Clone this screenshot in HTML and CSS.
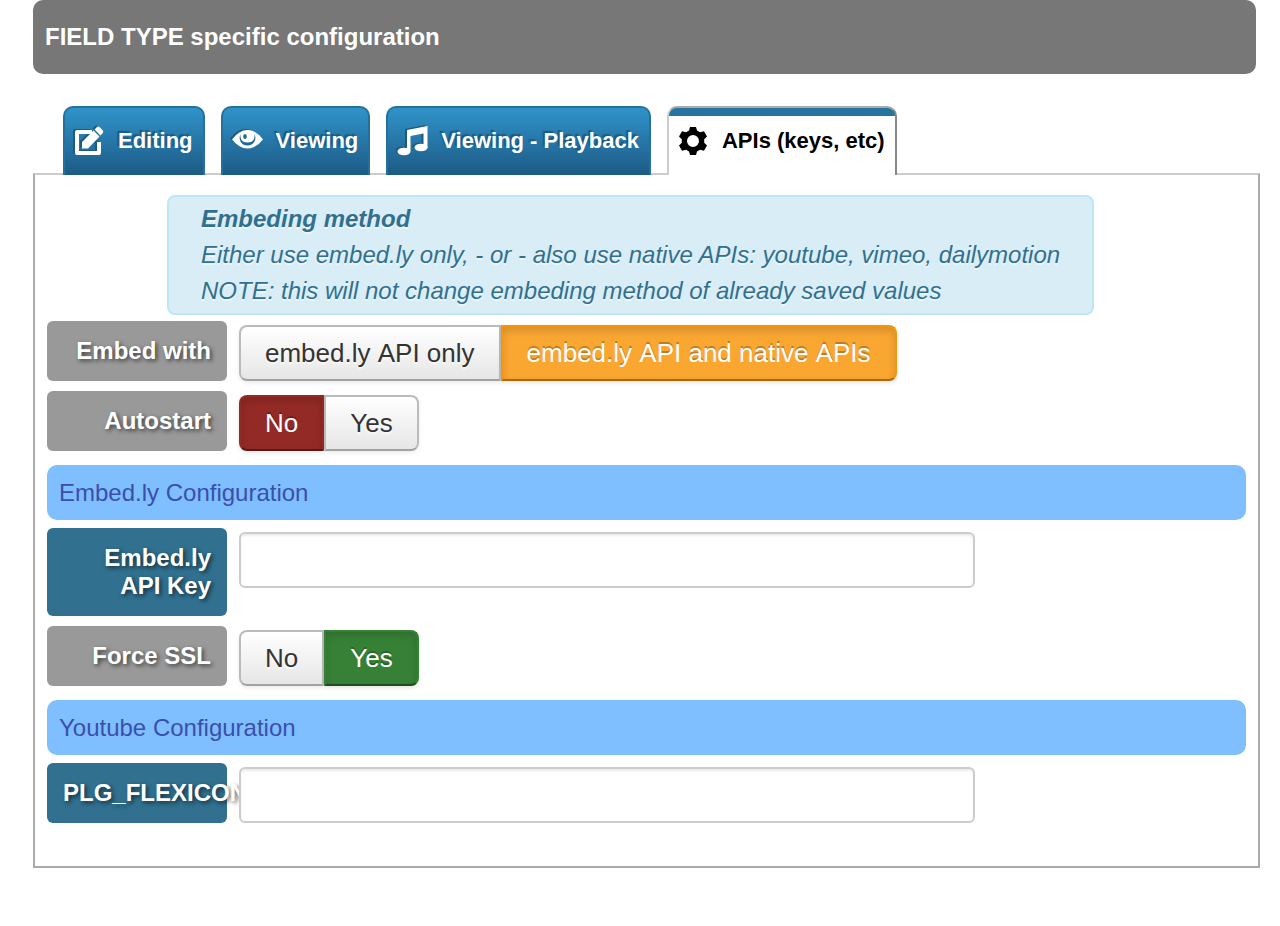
FILE: index.html
```
<!DOCTYPE html>
<html lang="en">
<head>
  <meta charset="UTF-8" />
  <meta name="viewport" content="width=device-width, initial-scale=1" />
  <title>Field type configuration</title>
  <link rel="stylesheet" href="styles.css">
</head>
<body>

<main>
  <h1 class="page-title">FIELD TYPE specific configuration</h1>

  <nav class="tabs">
    <a href="#editing" class="tab">
      <svg class="tab-icon" viewBox="0 0 30 30" aria-hidden="true">
        <path d="M17 7H2V28H24V17" fill="none" stroke="currentColor" stroke-width="4" stroke-linejoin="round"/>
        <path d="M7 23.500V17L18.500 5.500L24.500 11.500L13 23.500ZM19.500 4.500L22 2Q23.500 1 25 2.500L27.500 5Q29 6.500 27.800 8L25.500 10.500Z" fill="currentColor"/>
      </svg>
      Editing
    </a>
    <a href="#viewing" class="tab">
      <svg class="tab-icon" viewBox="0 0 30 30" aria-hidden="true">
        <path d="M-1 14.500Q6 5 14.500 5T30 14.500Q23 23.500 14.500 23.500T-1 14.500Z" fill="currentColor"/>
        <path d="M7.500 9C5 14 8 20.500 14.500 20.500S24 14 21.500 9C22 14 20 17.500 14.500 17.500S7 14 7.500 9Z" fill="#206896"/>
        <ellipse cx="12" cy="11.500" rx="1.800" ry="2.500" fill="#206896"/>
      </svg>
      Viewing
    </a>
    <a href="#playback" class="tab">
      <svg class="tab-icon" viewBox="0 0 30 30" aria-hidden="true">
        <path d="M9 5L29.500 1V23H25.500V8.500L12.500 11V26H9Z" fill="currentColor"/>
        <ellipse cx="6" cy="26.500" rx="6.500" ry="3.800" fill="currentColor"/>
        <ellipse cx="23" cy="22.500" rx="6.500" ry="3.800" fill="currentColor"/>
      </svg>
      Viewing - Playback
    </a>
    <a href="#apis" class="tab tab-active" aria-current="page">
      <svg class="tab-icon" viewBox="0 0 30 30" aria-hidden="true">
        <path fill-rule="evenodd" d="M11 2H17L18 5.500L21 7.300L25 6.300L28 11.500L25.200 14.200V17.800L28 20.500L25 25.700L21 24.700L18 26.500L17 30H11L10 26.500L7 24.700L3 25.700L0 20.500L2.800 17.800V14.200L0 11.500L3 6.300L7 7.300L10 5.500ZM14 10A6 6 0 1 0 14 22A6 6 0 1 0 14 10Z" fill="currentColor"/>
      </svg>
      APIs (keys, etc)
    </a>
  </nav>

  <form class="panel" id="apis">
    <div class="note">
      <strong>Embeding method</strong><br>
      Either use embed.ly only, - or - also use native APIs: youtube, vimeo, dailymotion<br>
      NOTE: this will not change embeding method of already saved values
    </div>

    <div class="row">
      <span class="label" id="embed-label">Embed with</span>
      <div class="toggle toggle-wide" role="radiogroup" aria-labelledby="embed-label">
        <input type="radio" name="embed" id="embed-only">
        <label for="embed-only">embed.ly API only</label>
        <input type="radio" name="embed" id="embed-native" checked>
        <label for="embed-native" class="orange">embed.ly API and native APIs</label>
      </div>
    </div>

    <div class="row">
      <span class="label" id="autostart-label">Autostart</span>
      <div class="toggle" role="radiogroup" aria-labelledby="autostart-label">
        <input type="radio" name="autostart" id="autostart-no" checked>
        <label for="autostart-no" class="red">No</label>
        <input type="radio" name="autostart" id="autostart-yes">
        <label for="autostart-yes" class="green">Yes</label>
      </div>
    </div>

    <h2 class="section-title">Embed.ly Configuration</h2>

    <div class="row">
      <label class="label label-blue" for="embedly-key">Embed.ly API Key</label>
      <input type="text" class="text-input" id="embedly-key" name="embedly_key">
    </div>

    <div class="row">
      <span class="label" id="ssl-label">Force SSL</span>
      <div class="toggle" role="radiogroup" aria-labelledby="ssl-label">
        <input type="radio" name="ssl" id="ssl-no">
        <label for="ssl-no" class="red">No</label>
        <input type="radio" name="ssl" id="ssl-yes" checked>
        <label for="ssl-yes" class="green">Yes</label>
      </div>
    </div>

    <h2 class="section-title">Youtube Configuration</h2>

    <div class="row">
      <label class="label label-blue" for="youtube-key">PLG_FLEXICON</label>
      <input type="text" class="text-input" id="youtube-key" name="youtube_key">
    </div>
  </form>
</main>

</body>
</html>
```

FILE: styles.css
```
* {
  box-sizing: border-box;
}

body {
  margin: 0;
  background: #fff;
  color: #333;
  font-family: "Liberation Sans", Arial, Helvetica, sans-serif;
  font-size: 24px;
}

main {
  padding: 0 20px 58px 33px;
}

.page-title {
  margin: 0 4px 32px 0;
  padding: 23px 12px;
  border-radius: 10px;
  background: #777;
  color: #fff;
  font-size: 24px;
  line-height: 28px;
}

/* Tabs */
.tabs {
  display: flex;
  gap: 16px;
  margin: 0 30px -2px;
  position: relative;
}

.tab {
  display: flex;
  gap: 13px;
  padding: 18px 10px 19px;
  border: 2px solid #23719c;
  border-bottom: 0;
  border-radius: 10px 10px 0 0;
  background: linear-gradient(#3093c9, #1c5a85);
  color: #fff;
  font-size: 22px;
  font-weight: bold;
  line-height: 30px;
  text-decoration: none;
  text-shadow: -2px -2px 1px #1c5a80;
  white-space: nowrap;
}

.tab-icon {
  width: 30px;
  height: 30px;
  margin-top: -1px;
  overflow: visible;
  filter: drop-shadow(-2px -1px 0 #1c5a80);
}

.tab-active {
  border-color: #aaa #888 #ccc #ccc;
  background: linear-gradient(#26749f 8px, #fff 8px);
  color: #000;
  text-shadow: none;
}

.tab-active .tab-icon {
  filter: none;
}

/* Panel */
.panel {
  padding: 20px 12px 33px;
  border: 2px solid #aaa;
  border-top-color: #ccc;
}

.note {
  width: fit-content;
  margin: 0 0 6px 120px;
  padding: 4px 32px;
  border: 2px solid #bce8f1;
  border-radius: 8px;
  background: #d9edf7;
  color: #31708f;
  font-style: italic;
  line-height: 36px;
  text-shadow: 0 2px 0 rgba(255, 255, 255, 0.5);
}

.section-title {
  margin: 14px 0 8px;
  padding: 12px;
  border-radius: 10px;
  background: #7fbfff;
  color: #3a4fac;
  font-size: 24px;
  font-weight: normal;
  line-height: 31px;
}

/* Rows */
.row {
  display: flex;
  align-items: flex-start;
  gap: 12px;
  margin-bottom: 10px;
}

.label {
  flex: none;
  width: 180px;
  padding: 16px;
  border-radius: 6px;
  background: #999;
  color: #fff;
  font-weight: bold;
  line-height: 28px;
  text-align: right;
  text-shadow: 2px 2px 4px rgba(0, 0, 0, 0.6);
}

.label-blue {
  background: #31708f;
}

.text-input {
  position: relative;
  width: 736px;
  height: 56px;
  margin-top: 4px;
  padding: 8px 12px;
  border: 2px solid #ccc;
  border-radius: 6px;
  background: #fff;
  box-shadow: inset 0 2px 2px rgba(0, 0, 0, 0.08);
  color: #555;
  font: inherit;
}

.toggle {
  display: flex;
  margin-top: 4px;
  position: relative;
}

.toggle-wide {
  font-kerning: none;
}

.toggle input {
  position: absolute;
  opacity: 0;
}

.toggle label {
  padding: 8px 24px;
  border: 2px solid #bbb;
  border-bottom-color: #a2a2a2;
  background: linear-gradient(#fff, #e6e6e6);
  box-shadow: 0 2px 4px rgba(0, 0, 0, 0.08);
  color: #333;
  font-size: 26px;
  line-height: 36px;
  text-shadow: 0 2px 2px rgba(255, 255, 255, 0.75);
  white-space: nowrap;
  cursor: pointer;
}

.toggle label:first-of-type {
  border-radius: 8px 0 0 8px;
}

.toggle label:last-of-type {
  border-radius: 0 8px 8px 0;
}

.toggle input:checked + label {
  color: #fff;
  text-shadow: 0 -2px 0 rgba(0, 0, 0, 0.25);
  box-shadow: inset 0 4px 8px rgba(0, 0, 0, 0.15), 0 2px 4px rgba(0, 0, 0, 0.1);
}

.toggle input:checked + .orange {
  border-color: #f89406 #f89406 #ad6704;
  background: #faa732;
}

.toggle input:checked + .red {
  border-color: #942a25 #942a25 #571916;
  background: #942a25;
}

.toggle input:checked + .green {
  border-color: #378137 #378137 #204b20;
  background: #378137;
}

.toggle input:focus-visible + label {
  outline: 2px solid #31708f;
}

@media (max-width: 1000px) {
  .tabs {
    flex-wrap: wrap;
  }

  .note {
    margin-left: 0;
  }

  .text-input {
    flex: 1;
    min-width: 0;
  }
}
```
